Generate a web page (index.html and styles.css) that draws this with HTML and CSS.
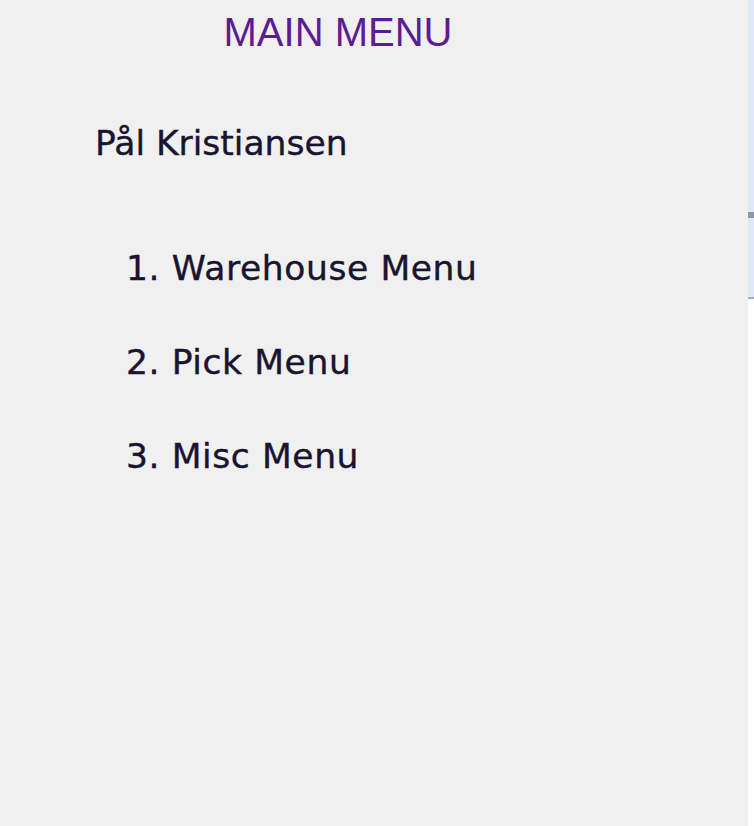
FILE: index.html
```html
<!DOCTYPE html>
<html lang="en">

<head>
  <meta charset="UTF-8" />
  <meta name="viewport" content="width=device-width, initial-scale=1.0" />
  <title>Main Menu</title>
  <link rel="stylesheet" href="styles.css">
</head>

<body>
  <div id="screen">
    <div id="menu">
      <h1 class="title">MAIN MENU</h1>
      <div class="user">Pål Kristiansen</div>
      <ul class="items">
        <li>1. Warehouse Menu</li>
        <li>2. Pick Menu</li>
        <li>3. Misc Menu</li>
      </ul>
    </div>

    <!-- edge of the window behind -->
    <div class="edge">
      <div class="edge-top"></div>
      <div class="edge-bar"></div>
      <div class="edge-mid"></div>
      <div class="edge-line"></div>
    </div>
  </div>
</body>

</html>
```

FILE: styles.css
```css
body {
  margin: 0;
  background-color: #f0f0f0;
}

#screen {
  display: flex;
  height: 826px;
}

#menu {
  flex: 1;
  padding-top: 8px;
}

.title {
  width: 676px;
  margin: 0;
  text-align: center;
  font-family: "Liberation Sans", Arial, sans-serif;
  font-size: 40px;
  font-weight: normal;
  line-height: 48px;
  color: #5b1d93;
}

.user {
  margin: 65px 0 0 95px;
  font-family: "DejaVu Sans", Verdana, sans-serif;
  font-size: 34.5px;
  line-height: 44px;
  color: #1a1430;
  -webkit-text-stroke: 0.4px #1a1430;
}

.items {
  list-style: none;
  margin: 81px 0 0 0;
  padding: 0 0 0 126px;
  display: flex;
  flex-direction: column;
  gap: 50px;
  font-family: "DejaVu Sans", Verdana, sans-serif;
  font-size: 34.5px;
  line-height: 44px;
  letter-spacing: 0.6px;
  color: #1a1430;
  -webkit-text-stroke: 0.4px #1a1430;
}

.edge {
  width: 6px;
  display: flex;
  flex-direction: column;
  background-color: #ffffff;
}

.edge-top {
  height: 212px;
  background-color: #dfe8f6;
}

.edge-bar {
  height: 6px;
  background-color: #8e97a6;
}

.edge-mid {
  height: 79px;
  background-color: #dfe8f6;
}

.edge-line {
  height: 2px;
  background-color: #a3abb8;
}
```
